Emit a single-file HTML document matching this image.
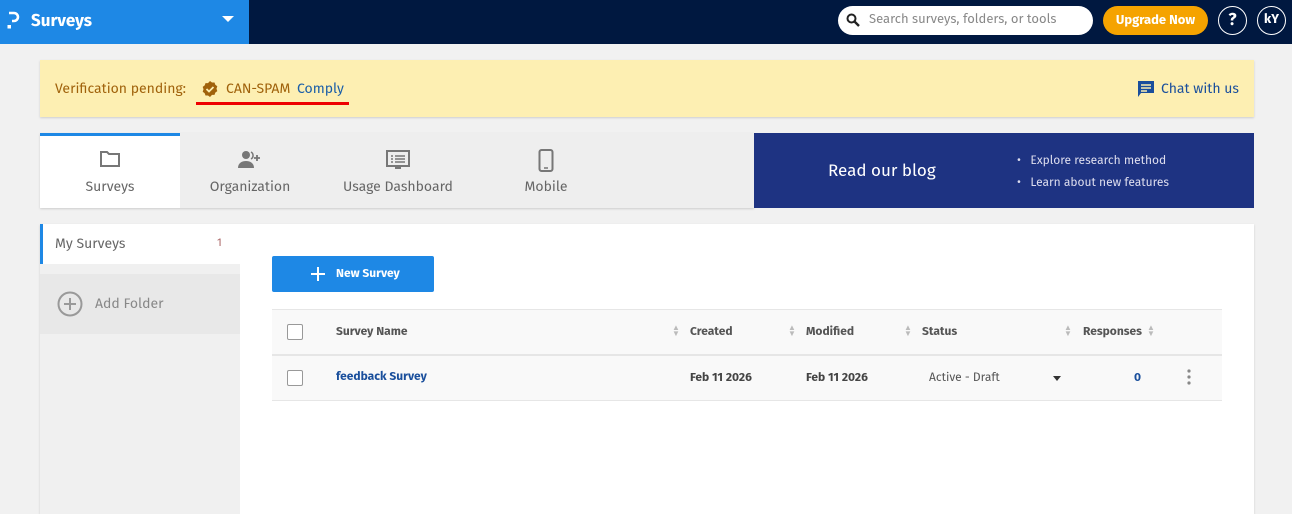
<!DOCTYPE html>
<html><head><style>
*{box-sizing:border-box;margin:0;padding:0}
body{width:1292px;height:507px;overflow:hidden;background:#f1f1f1;font-family:"Fira Sans","Liberation Sans",sans-serif;position:relative}
.abs{position:absolute}
</style></head><body>
<div class="abs" style="left:0;top:0;width:249px;height:44px;background:#1e88e5"></div>
<div class="abs" style="left:249px;top:0;width:1043px;height:44px;background:#001840"></div>
<svg class="abs" style="left:7px;top:11px" width="14" height="20" viewBox="0 0 14 20"><path d="M2 2h5a4 4 0 010 8H5" fill="none" stroke="#fff" stroke-width="2.6"/><rect x="0.5" y="14" width="3.5" height="3.5" fill="#fff"/></svg>
<div class="abs" style="left:31px;top:10px;color:#fff;font-size:17px;font-weight:bold">Surveys</div>
<div class="abs" style="left:222px;top:16px;width:0;height:0;border-left:6px solid transparent;border-right:6px solid transparent;border-top:6px solid #fff"></div>
<div class="abs" style="left:838px;top:6px;width:255px;height:29px;border-radius:15px;background:#fff"></div>
<svg class="abs" style="left:846px;top:13px" width="14" height="14" viewBox="0 0 14 14"><circle cx="5.5" cy="5.5" r="4" fill="none" stroke="#222" stroke-width="2"/><path d="M8.5 8.5L13 13" stroke="#222" stroke-width="2.4"/></svg>
<div class="abs" style="left:869px;top:12px;color:#888;font-size:13px">Search surveys, folders, or tools</div>
<div class="abs" style="left:1103px;top:6px;width:105px;height:29px;border-radius:15px;background:#f5a300;color:#fff;font-size:13px;font-weight:bold;text-align:center;line-height:29px">Upgrade Now</div>
<div class="abs" style="left:1218px;top:6px;width:29px;height:29px;border-radius:50%;border:1.5px solid #fff;color:#fff;font-weight:bold;font-size:17px;text-align:center;line-height:26px">?</div>
<div class="abs" style="left:1257px;top:6px;width:29px;height:29px;border-radius:50%;border:1.5px solid #fff;color:#fff;font-weight:bold;font-size:13px;text-align:center;line-height:26px">kY</div>

<div class="abs" style="left:40px;top:60px;width:1214px;height:57px;background:#fdefb2;box-shadow:0 1px 2px rgba(0,0,0,.15)"></div>
<div class="abs" style="left:55px;top:80px;color:#a0620b;font-size:14px">Verification pending:</div>
<svg class="abs" style="left:202px;top:81px" width="16" height="16" viewBox="0 0 16 16"><path d="M8 0l2 1.5 2.5 0 .8 2.3 2 1.5-.8 2.4.8 2.4-2 1.5-.8 2.3-2.5 0L8 16l-2-1.5-2.5 0-.8-2.3-2-1.5.8-2.4-.8-2.4 2-1.5.8-2.3 2.5 0z" fill="#a0620b"/><path d="M4.5 8l2.5 2.5 4.5-4.5" stroke="#fdefb2" stroke-width="1.8" fill="none"/></svg>
<div class="abs" style="left:226px;top:80px;color:#a0620b;font-size:14px">CAN-SPAM</div>
<div class="abs" style="left:297px;top:80px;color:#1a5ea8;font-size:14px">Comply</div>
<div class="abs" style="left:196px;top:102px;width:153px;height:3px;background:#e00"></div>
<svg class="abs" style="left:1137px;top:80px" width="18" height="18" viewBox="0 0 18 18"><path d="M1 1h16v12H4l-3 4z" fill="#1a4f9c"/><path d="M4 5h10M4 8h10M4 11h6" stroke="#fdefb2" stroke-width="1.5"/></svg>
<div class="abs" style="left:1161px;top:80px;color:#1a4f9c;font-size:14px">Chat with us</div>

<div class="abs" style="left:40px;top:133px;width:714px;height:75px;background:#eeeeee;box-shadow:0 1px 2px rgba(0,0,0,.15)"></div>
<div class="abs" style="left:40px;top:133px;width:140px;height:75px;background:#fff;border-top:3px solid #1e88e5"></div>
<svg class="abs" style="left:100px;top:151px" width="20" height="16" viewBox="0 0 20 16"><path d="M1 1h6l2 2h10v12H1z" fill="none" stroke="#777" stroke-width="2"/></svg>
<div class="abs" style="left:40px;top:178px;width:140px;text-align:center;color:#666;font-size:14px">Surveys</div>
<svg class="abs" style="left:237px;top:150px" width="26" height="20" viewBox="0 0 26 20"><circle cx="9" cy="5" r="4" fill="#777"/><path d="M1 18c0-5 4-7 8-7s8 2 8 7z" fill="#777"/><path d="M14 2a4 4 0 010 7" stroke="#777" stroke-width="1.5" fill="none"/><path d="M20 5v6M17 8h6" stroke="#777" stroke-width="1.8"/></svg>
<div class="abs" style="left:180px;top:178px;width:140px;text-align:center;color:#666;font-size:14px">Organization</div>
<svg class="abs" style="left:386px;top:150px" width="24" height="20" viewBox="0 0 24 20"><rect x="1" y="1" width="22" height="15" fill="none" stroke="#777" stroke-width="2"/><path d="M5 6h2M9 6h10M5 9h2M9 9h10M5 12h2M9 12h10" stroke="#777" stroke-width="1.5"/><path d="M9 17h6v2H9z" fill="#777"/></svg>
<div class="abs" style="left:320px;top:178px;width:156px;text-align:center;color:#666;font-size:14px">Usage Dashboard</div>
<svg class="abs" style="left:538px;top:149px" width="16" height="23" viewBox="0 0 16 23"><rect x="1.5" y="1" width="13" height="21" rx="2" fill="none" stroke="#777" stroke-width="2"/><path d="M6 19h4" stroke="#777" stroke-width="1.5"/></svg>
<div class="abs" style="left:476px;top:178px;width:140px;text-align:center;color:#666;font-size:14px">Mobile</div>
<div class="abs" style="left:754px;top:133px;width:500px;height:75px;background:#1e3382"></div>
<div class="abs" style="left:828px;top:160px;color:#fff;font-size:17px">Read our blog</div>
<div class="abs" style="left:1017px;top:150px;color:#dde;font-size:12px;line-height:22px">•&nbsp;&nbsp; Explore research method<br>•&nbsp;&nbsp; Learn about new features</div>

<div class="abs" style="left:40px;top:224px;width:1214px;height:290px;background:#fff;box-shadow:0 1px 2px rgba(0,0,0,.15)"></div>
<div class="abs" style="left:40px;top:264px;width:200px;height:250px;background:#f0f0f0"></div>
<div class="abs" style="left:40px;top:274px;width:200px;height:60px;background:#e8e8e8"></div>
<div class="abs" style="left:40px;top:224px;width:3px;height:40px;background:#1e88e5"></div>
<div class="abs" style="left:55px;top:235px;color:#666;font-size:14px">My Surveys</div>
<div class="abs" style="left:217px;top:236px;color:#a66;font-size:11px">1</div>
<svg class="abs" style="left:57px;top:291px" width="26" height="26" viewBox="0 0 26 26"><circle cx="13" cy="13" r="11.5" fill="none" stroke="#999" stroke-width="2"/><path d="M13 7v12M7 13h12" stroke="#999" stroke-width="2"/></svg>
<div class="abs" style="left:95px;top:295px;color:#888;font-size:14px">Add Folder</div>

<div class="abs" style="left:272px;top:256px;width:162px;height:36px;background:#1e88e5;border-radius:2px"></div>
<svg class="abs" style="left:311px;top:267px" width="14" height="14"><path d="M7 0v14M0 7h14" stroke="#fff" stroke-width="2"/></svg>
<div class="abs" style="left:336px;top:267px;color:#fff;font-size:12px;font-weight:bold">New Survey</div>

<div class="abs" style="left:272px;top:309px;width:950px;height:92px;background:#f9f9f9;border-top:1px solid #e6e6e6;border-bottom:1px solid #e6e6e6"></div>
<div class="abs" style="left:272px;top:354px;width:950px;height:2px;background:#e6e6e6"></div>
<div class="abs" style="left:287px;top:324px;width:16px;height:16px;border:1px solid #999;background:#fff;border-radius:2px"></div>
<div class="abs" style="left:287px;top:370px;width:16px;height:16px;border:1px solid #999;background:#fff;border-radius:2px"></div>
<div class="abs" style="font-size:12px;font-weight:bold;color:#555;top:325px;left:336px">Survey Name</div>
<div class="abs" style="font-size:12px;font-weight:bold;color:#555;top:325px;left:690px">Created</div>
<div class="abs" style="font-size:12px;font-weight:bold;color:#555;top:325px;left:806px">Modified</div>
<div class="abs" style="font-size:12px;font-weight:bold;color:#555;top:325px;left:922px">Status</div>
<div class="abs" style="font-size:12px;font-weight:bold;color:#555;top:325px;left:1083px">Responses</div>
<div class="abs" style="font-size:8px;color:#bbb;top:326px;left:672px;line-height:6px">▲<br>▼</div>
<div class="abs" style="font-size:8px;color:#bbb;top:326px;left:788px;line-height:6px">▲<br>▼</div>
<div class="abs" style="font-size:8px;color:#bbb;top:326px;left:904px;line-height:6px">▲<br>▼</div>
<div class="abs" style="font-size:8px;color:#bbb;top:326px;left:1064px;line-height:6px">▲<br>▼</div>
<div class="abs" style="font-size:8px;color:#bbb;top:326px;left:1147px;line-height:6px">▲<br>▼</div>
<div class="abs" style="font-size:12px;font-weight:bold;color:#1a4f9c;top:370px;left:336px">feedback Survey</div>
<div class="abs" style="font-size:12px;font-weight:bold;color:#444;top:371px;left:690px">Feb 11 2026</div>
<div class="abs" style="font-size:12px;font-weight:bold;color:#444;top:371px;left:806px">Feb 11 2026</div>
<div class="abs" style="font-size:12px;color:#555;top:371px;left:929px">Active - Draft</div>
<div class="abs" style="left:1053px;top:376px;border-left:4px solid transparent;border-right:4px solid transparent;border-top:5px solid #333"></div>
<div class="abs" style="font-size:12px;font-weight:bold;color:#1a4f9c;top:371px;left:1134px">0</div>
<svg class="abs" style="left:1186px;top:369px" width="6" height="16"><circle cx="3" cy="2" r="1.6" fill="#888"/><circle cx="3" cy="8" r="1.6" fill="#888"/><circle cx="3" cy="14" r="1.6" fill="#888"/></svg>
</body></html>
